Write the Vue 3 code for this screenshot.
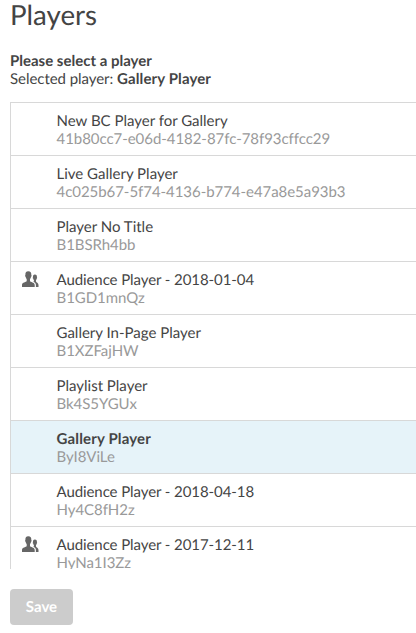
<script setup>
const players = [
  { name: 'New BC Player for Gallery', id: '41b80cc7-e06d-4182-87fc-78f93cffcc29' },
  { name: 'Live Gallery Player', id: '4c025b67-5f74-4136-b774-e47a8e5a93b3' },
  { name: 'Player No Title', id: 'B1BSRh4bb' },
  { name: 'Audience Player - 2018-01-04', id: 'B1GD1mnQz', audience: true },
  { name: 'Gallery In-Page Player', id: 'B1XZFajHW' },
  { name: 'Playlist Player', id: 'Bk4S5YGUx' },
  { name: 'Gallery Player', id: 'ByI8ViLe', selected: true },
  { name: 'Audience Player - 2018-04-18', id: 'Hy4C8fH2z' },
  { name: 'Audience Player - 2017-12-11', id: 'HyNa1I3Zz', audience: true },
]
</script>

<template>
  <main class="page">
    <h1>Players</h1>
    <p class="prompt">Please select a player</p>
    <p class="current">Selected player: <b>Gallery Player</b></p>
    <ul class="list">
      <li v-for="p in players" :key="p.id" class="row" :class="{ selected: p.selected }">
        <span class="icon">
          <svg v-if="p.audience" width="17" height="17" viewBox="0 0 17 17">
            <path d="M6.300 .3C8.600 .3 9.500 1.900 9.300 4.100 9.800 4.300 9.600 5.700 9 6.100 8.800 7.200 8.300 7.800 8 8.300V10.100C8.300 11.400 12.700 11.300 12.700 14V16H0V14C0 11.300 4.400 11.400 4.700 10.100V8.300C4.400 7.800 3.900 7.200 3.700 6.100 3.100 5.700 2.900 4.300 3.400 4.100 3.200 1.900 4 .3 6.300 .3Z" />
            <path d="M12.900 3.500C14.500 3.500 15.100 4.700 14.900 6.200 15.300 6.500 15.100 7.400 14.700 7.600 14.600 8.400 14.300 8.800 14 9.200V10.600C14.300 11.700 16.500 12 16.500 14V16H13.900V14C13.900 12.200 12.700 11.300 11.300 10.700 11.900 10.400 12 10 11.900 9.200 11.600 8.800 11.300 8.400 11.200 7.600 10.700 7.400 10.600 6.500 11 6.200 10.800 4.700 11.400 3.500 12.900 3.500Z" />
          </svg>
        </span>
        <span class="text">
          <span class="name" :class="{ dated: /\d/.test(p.name) }">{{ p.name }}</span>
          <span class="id">{{ p.id }}</span>
        </span>
      </li>
    </ul>
    <button class="save">Save</button>
  </main>
</template>

<style>
body { background: #fff; overflow: hidden; }
</style>

<style scoped>
.page { height: 633px; box-sizing: border-box; padding-left: 10px; font: 15px/18px Lato, sans-serif; color: #444; text-rendering: geometricPrecision; }
h1 { margin: 0; font-size: 27.700px; font-weight: 400; line-height: 29px; padding-bottom: 23px; }
p { margin: 0; }
.prompt { font-weight: 700; }
.current { letter-spacing: -0.05px; }
.current b { letter-spacing: 0.12px; }
.list { margin: 14px 0 0; padding: 0; height: 467px; box-sizing: border-box; overflow: hidden; list-style: none; border-left: 1px solid #d8d8d8; border-top: 1px solid #d8d8d8; }
.row { display: flex; height: 53px; box-sizing: border-box; border-bottom: 1px solid #d8d8d8; padding-top: 9px; }
.icon { width: 45.500px; box-sizing: border-box; padding-left: 11px; flex: none; }
.icon svg { display: block; fill: #666; }
.text { display: flex; flex-direction: column; }
.dated { letter-spacing: -0.08px; }
.id { color: #999; letter-spacing: -0.05px; }
.selected { background: #e6f3f9; }
.selected .name { font-weight: 700; letter-spacing: 0.15px; }
.save { display: block; margin-top: 20px; width: 63px; height: 36px; border: 0; border-radius: 4px; padding: 0; background: #ccc; color: #fff; font: 700 15px/36px Lato, sans-serif; text-rendering: geometricPrecision; }
</style>
